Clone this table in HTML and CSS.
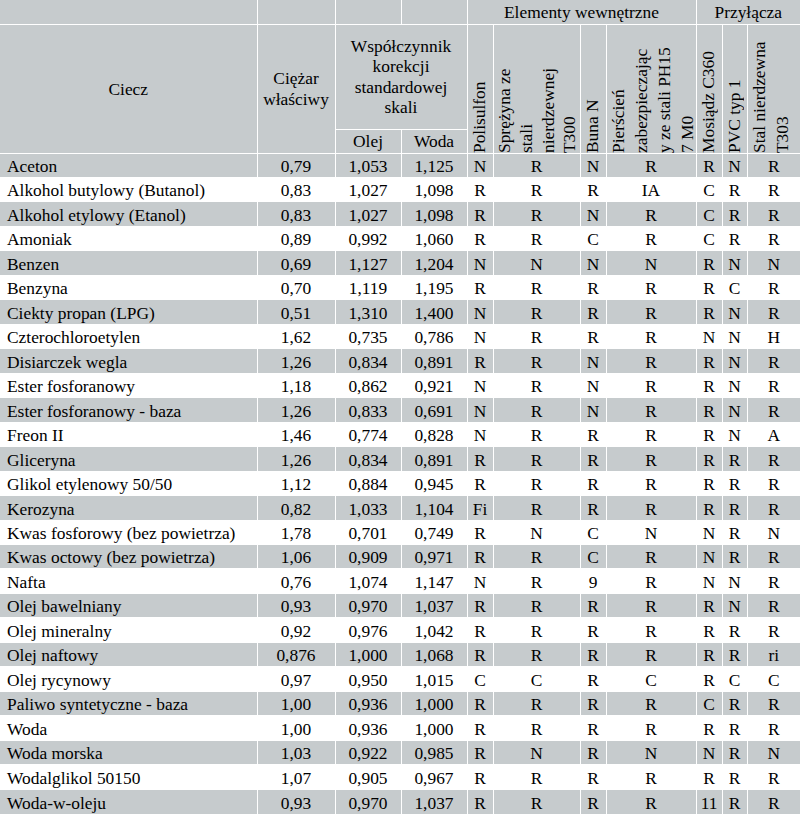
FILE: index.html
```html
<!DOCTYPE html>
<html lang="pl">
<head>
<meta charset="utf-8">
<title>Tabela odporności chemicznej</title>
<link rel="stylesheet" href="styles.css">
</head>
<body>
<table class="chem">
  <colgroup>
    <col class="c-name"><col class="c-sg"><col class="c-k"><col class="c-k">
    <col class="c-n"><col class="c-w87"><col class="c-n"><col class="c-w90">
    <col class="c-n"><col class="c-n25"><col class="c-w53">
  </colgroup>
  <thead>
    <tr class="h1">
      <th></th><th></th><th></th><th></th>
      <th colspan="4">Elementy wewnętrzne</th>
      <th colspan="3">Przyłącza</th>
    </tr>
    <tr class="h2">
      <th rowspan="2">Ciecz</th>
      <th rowspan="2" class="lh">Ciężar<br>właściwy</th>
      <th colspan="2" class="lh">Współczynnik<br>korekcji<br>standardowej<br>skali</th>
      <th rowspan="2" class="vt"><div class="rot">Polisulfon</div></th>
      <th rowspan="2" class="vt"><div class="rot tight">Sprężyna ze<br>stali<br>nierdzewnej<br>T300</div></th>
      <th rowspan="2" class="vt"><div class="rot">Buna N</div></th>
      <th rowspan="2" class="vt"><div class="rot">Pierścień<br>zabezpieczając<br>y ze stali PH15<br>7 M0</div></th>
      <th rowspan="2" class="vt"><div class="rot">Mosiądz C360</div></th>
      <th rowspan="2" class="vt"><div class="rot">PVC typ 1</div></th>
      <th rowspan="2" class="vt"><div class="rot">Stal nierdzewna<br>T303</div></th>
    </tr>
    <tr class="h3">
      <th>Olej</th><th>Woda</th>
    </tr>
  </thead>
  <tbody>
    <tr><td>Aceton</td><td>0,79</td><td>1,053</td><td>1,125</td><td>N</td><td>R</td><td>N</td><td>R</td><td>R</td><td>N</td><td>R</td></tr>
    <tr><td>Alkohol butylowy (Butanol)</td><td>0,83</td><td>1,027</td><td>1,098</td><td>R</td><td>R</td><td>R</td><td>IA</td><td>C</td><td>R</td><td>R</td></tr>
    <tr><td>Alkohol etylowy (Etanol)</td><td>0,83</td><td>1,027</td><td>1,098</td><td>R</td><td>R</td><td>N</td><td>R</td><td>C</td><td>R</td><td>R</td></tr>
    <tr><td>Amoniak</td><td>0,89</td><td>0,992</td><td>1,060</td><td>R</td><td>R</td><td>C</td><td>R</td><td>C</td><td>R</td><td>R</td></tr>
    <tr><td>Benzen</td><td>0,69</td><td>1,127</td><td>1,204</td><td>N</td><td>N</td><td>N</td><td>N</td><td>R</td><td>N</td><td>N</td></tr>
    <tr><td>Benzyna</td><td>0,70</td><td>1,119</td><td>1,195</td><td>R</td><td>R</td><td>R</td><td>R</td><td>R</td><td>C</td><td>R</td></tr>
    <tr><td>Ciekty propan (LPG)</td><td>0,51</td><td>1,310</td><td>1,400</td><td>N</td><td>R</td><td>R</td><td>R</td><td>R</td><td>N</td><td>R</td></tr>
    <tr><td>Czterochloroetylen</td><td>1,62</td><td>0,735</td><td>0,786</td><td>N</td><td>R</td><td>R</td><td>R</td><td>N</td><td>N</td><td>H</td></tr>
    <tr><td>Disiarczek wegla</td><td>1,26</td><td>0,834</td><td>0,891</td><td>R</td><td>R</td><td>N</td><td>R</td><td>R</td><td>N</td><td>R</td></tr>
    <tr><td>Ester fosforanowy</td><td>1,18</td><td>0,862</td><td>0,921</td><td>N</td><td>R</td><td>N</td><td>R</td><td>R</td><td>N</td><td>R</td></tr>
    <tr><td>Ester fosforanowy - baza</td><td>1,26</td><td>0,833</td><td>0,691</td><td>N</td><td>R</td><td>N</td><td>R</td><td>R</td><td>N</td><td>R</td></tr>
    <tr><td>Freon II</td><td>1,46</td><td>0,774</td><td>0,828</td><td>N</td><td>R</td><td>R</td><td>R</td><td>R</td><td>N</td><td>A</td></tr>
    <tr><td>Gliceryna</td><td>1,26</td><td>0,834</td><td>0,891</td><td>R</td><td>R</td><td>R</td><td>R</td><td>R</td><td>R</td><td>R</td></tr>
    <tr><td>Glikol etylenowy 50/50</td><td>1,12</td><td>0,884</td><td>0,945</td><td>R</td><td>R</td><td>R</td><td>R</td><td>R</td><td>R</td><td>R</td></tr>
    <tr><td>Kerozyna</td><td>0,82</td><td>1,033</td><td>1,104</td><td>Fi</td><td>R</td><td>R</td><td>R</td><td>R</td><td>R</td><td>R</td></tr>
    <tr><td>Kwas fosforowy (bez powietrza)</td><td>1,78</td><td>0,701</td><td>0,749</td><td>R</td><td>N</td><td>C</td><td>N</td><td>N</td><td>R</td><td>N</td></tr>
    <tr><td>Kwas octowy (bez powietrza)</td><td>1,06</td><td>0,909</td><td>0,971</td><td>R</td><td>R</td><td>C</td><td>R</td><td>N</td><td>R</td><td>R</td></tr>
    <tr><td>Nafta</td><td>0,76</td><td>1,074</td><td>1,147</td><td>N</td><td>R</td><td>9</td><td>R</td><td>N</td><td>N</td><td>R</td></tr>
    <tr><td>Olej bawelniany</td><td>0,93</td><td>0,970</td><td>1,037</td><td>R</td><td>R</td><td>R</td><td>R</td><td>R</td><td>N</td><td>R</td></tr>
    <tr><td>Olej mineralny</td><td>0,92</td><td>0,976</td><td>1,042</td><td>R</td><td>R</td><td>R</td><td>R</td><td>R</td><td>R</td><td>R</td></tr>
    <tr><td>Olej naftowy</td><td>0,876</td><td>1,000</td><td>1,068</td><td>R</td><td>R</td><td>R</td><td>R</td><td>R</td><td>R</td><td>ri</td></tr>
    <tr><td>Olej rycynowy</td><td>0,97</td><td>0,950</td><td>1,015</td><td>C</td><td>C</td><td>R</td><td>C</td><td>R</td><td>C</td><td>C</td></tr>
    <tr><td>Paliwo syntetyczne - baza</td><td>1,00</td><td>0,936</td><td>1,000</td><td>R</td><td>R</td><td>R</td><td>R</td><td>C</td><td>R</td><td>R</td></tr>
    <tr><td>Woda</td><td>1,00</td><td>0,936</td><td>1,000</td><td>R</td><td>R</td><td>R</td><td>R</td><td>R</td><td>R</td><td>R</td></tr>
    <tr><td>Woda morska</td><td>1,03</td><td>0,922</td><td>0,985</td><td>R</td><td>N</td><td>R</td><td>N</td><td>N</td><td>R</td><td>N</td></tr>
    <tr><td>Wodalglikol 50150</td><td>1,07</td><td>0,905</td><td>0,967</td><td>R</td><td>R</td><td>R</td><td>R</td><td>R</td><td>R</td><td>R</td></tr>
    <tr><td>Woda-w-oleju</td><td>0,93</td><td>0,970</td><td>1,037</td><td>R</td><td>R</td><td>R</td><td>R</td><td>11</td><td>R</td><td>R</td></tr>
  </tbody>
</table>
</body>
</html>
```

FILE: styles.css
```css
html, body {
  margin: 0;
  padding: 0;
  background: #ffffff;
}

body {
  font-family: "Liberation Serif", "Times New Roman", serif;
  font-size: 17.4px;
  color: #000000;
}

.chem {
  width: 800px;
  table-layout: fixed;
  border-collapse: collapse;
  border-style: hidden;
}

.chem th,
.chem td {
  border: 1px solid #ffffff;
  padding: 0;
  font-weight: normal;
  text-align: center;
  white-space: nowrap;
}

.c-name { width: 257px; }
.c-sg { width: 78px; }
.c-k { width: 66px; }
.c-n { width: 26px; }
.c-n25 { width: 25px; }
.c-w87 { width: 87px; }
.c-w90 { width: 90px; }
.c-w53 { width: 53px; }

.chem thead th {
  background: #c6cbcd;
  vertical-align: middle;
  line-height: 20px;
}

.h1 { height: 24px; }
.h2 { height: 105px; }
.h3 { height: 24px; }

.chem th.lh {
  line-height: 20.3px;
}

.chem th.vt {
  text-align: left;
  vertical-align: bottom;
}

.rot {
  writing-mode: vertical-rl;
  transform: rotate(180deg);
  height: 126px;
  line-height: 23px;
  text-align: left;
  white-space: nowrap;
}

.rot.tight {
  line-height: 21.8px;
}

.chem tbody tr {
  height: 24.48px;
}

.chem tbody td {
  line-height: 20px;
  vertical-align: bottom;
  padding-bottom: 1px;
}

.chem tbody td:first-child {
  text-align: left;
  padding-left: 7px;
}

.chem tbody tr:nth-child(odd) td {
  background: #c6cbcd;
}
```
